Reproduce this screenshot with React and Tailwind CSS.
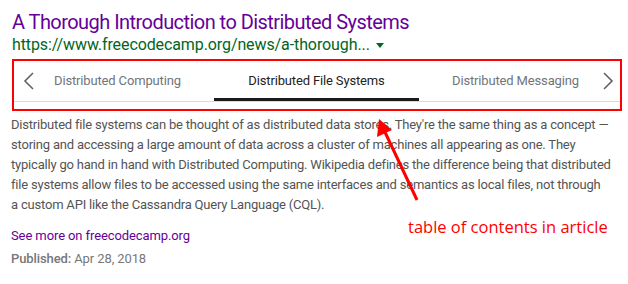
import React from "react";

export default function App() {
  return (
    <div className="relative w-[628px] h-[284px] bg-white overflow-hidden" style={{ fontFamily: "Roboto, Arial, sans-serif" }}>
      <div className="pt-[9px] pl-[12px] pr-[6px]">
        <div className="text-[20px] leading-[26px] tracking-[-0.55px] text-[#660099] whitespace-nowrap">
          A Thorough Introduction to Distributed Systems
        </div>
        <div className="flex items-center text-[16px] leading-[20px] tracking-[-0.1px] text-[#006621] whitespace-nowrap">
          <span>https://www.freecodecamp.org/news/a-thorough...</span>
          <span className="ml-[6px] inline-block w-0 h-0 border-l-[4px] border-r-[4px] border-t-[5px] border-l-transparent border-r-transparent border-t-[#006621]" />
        </div>
        <div className="mt-[4px] w-[610px] border-2 border-[#ff0000] pb-[7px]">
          <div className="flex items-stretch h-[41px] border-b border-[#dadada] text-[13px] tracking-[-0.15px] whitespace-nowrap">
            <div className="w-[30px] flex items-center justify-center">
              <svg width="12" height="20" viewBox="0 0 12 20" fill="none">
                <path d="M10 2 L2 10 L10 18" stroke="#5f6368" strokeWidth="1.6" />
              </svg>
            </div>
            <div className="w-[170px] flex items-center pl-[10px] text-[#70757a]">Distributed Computing</div>
            <div className="w-[205px] relative flex items-center justify-center text-[#222]">
              Distributed File Systems
              <div className="absolute left-0 right-0 bottom-0 h-[3px] bg-[#1a1a1a]" />
            </div>
            <div className="w-[176px] flex items-center pl-[33px] text-[#70757a]">Distributed Messaging</div>
            <div className="flex-1 flex items-center justify-center">
              <svg width="12" height="20" viewBox="0 0 12 20" fill="none">
                <path d="M2 2 L10 10 L2 18" stroke="#5f6368" strokeWidth="1.6" />
              </svg>
            </div>
          </div>
        </div>
        <p className="mt-[4px] -ml-[1px] text-[13px] leading-[20px] tracking-[-0.2px] text-[#545454] w-[612px]">
          Distributed file systems can be thought of as distributed data stores. They're the same thing as a concept — storing and accessing a large amount of data across a cluster of machines all appearing as one. They typically go hand in hand with Distributed Computing. Wikipedia defines the difference being that distributed file systems allow files to be accessed using the same interfaces and semantics as local files, not through a{"\u00A0"}custom API like the Cassandra Query Language (CQL).
        </p>
        <div className="mt-[11px] -ml-[1px] text-[13px] leading-[20px] tracking-[-0.1px] text-[#660099]">See more on freecodecamp.org</div>
        <div className="mt-[3px] -ml-[1px] text-[13px] leading-[20px] tracking-[-0.1px] text-[#777]">
          <span className="font-medium">Published:</span> Apr 28, 2018
        </div>
      </div>
      <svg className="absolute left-0 top-0 pointer-events-none" width="628" height="284">
        <line x1="417" y1="200" x2="384" y2="130" stroke="#ff0000" strokeWidth="3" />
        <polygon points="379,119 377,137 392,130" fill="#ff0000" />
      </svg>
      <div className="absolute left-[408px] top-[215px] text-[16.5px] leading-[24px] text-[#ff0000] whitespace-nowrap" style={{ fontFamily: "'Open Sans', sans-serif" }}>
        table of contents in article
      </div>
    </div>
  );
}
